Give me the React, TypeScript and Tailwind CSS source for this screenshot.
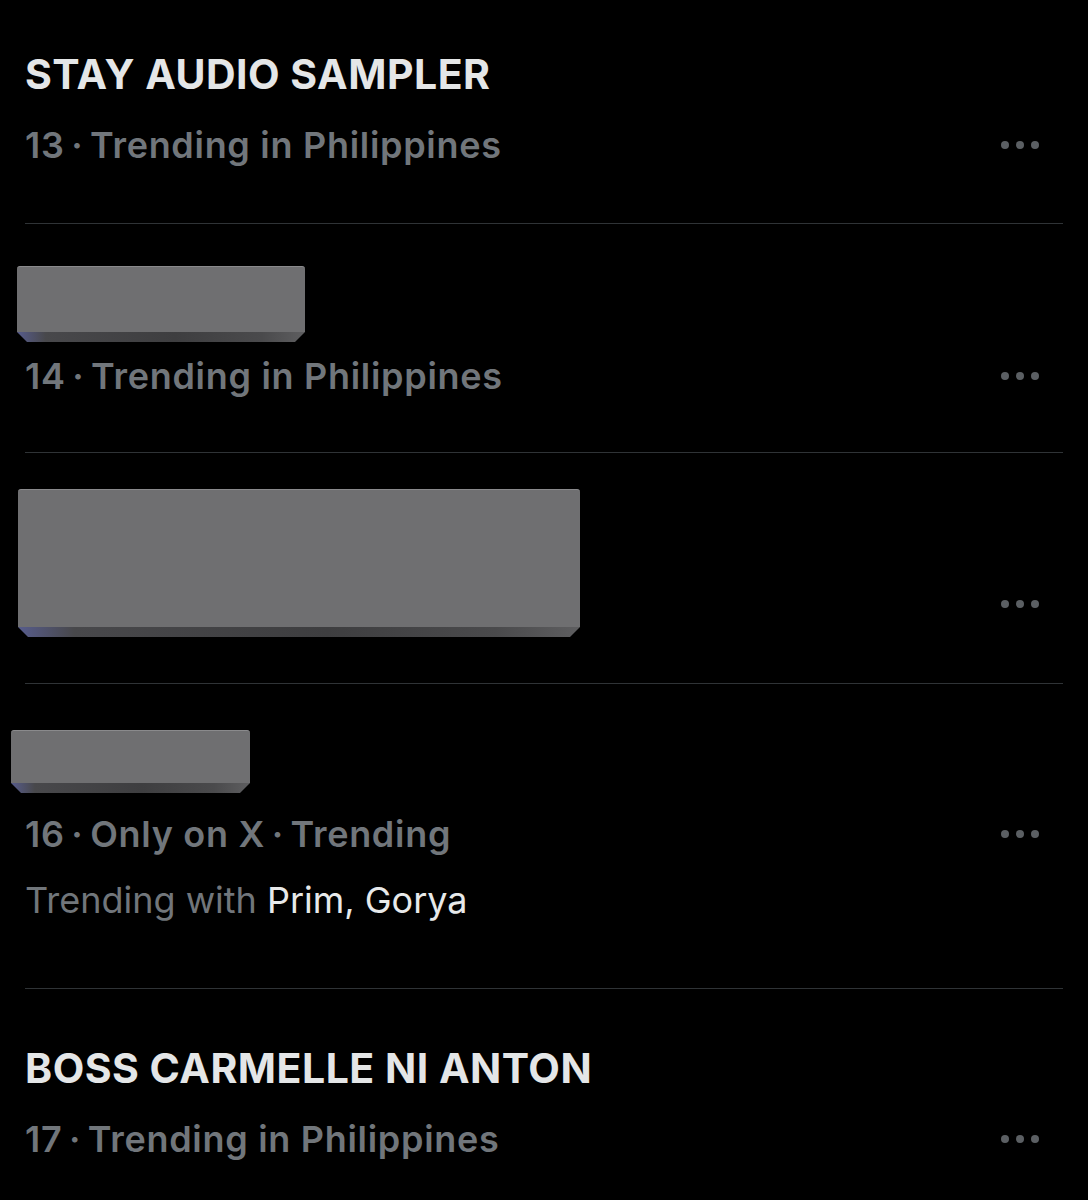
import React from 'react';

const font = { fontFamily: 'Inter, "Noto Sans", sans-serif' };

const Dots: React.FC = () => (
  <div className="flex items-center gap-[7px] pr-[24px]">
    <span className="w-[8px] h-[8px] rounded-full bg-[#5b5f63]" />
    <span className="w-[8px] h-[8px] rounded-full bg-[#5b5f63]" />
    <span className="w-[8px] h-[8px] rounded-full bg-[#5b5f63]" />
  </div>
);

// redaction block with a bevelled lower edge
const Redact: React.FC<{ w: number; h: number; className?: string }> = ({ w, h, className }) => (
  <div className={`flex flex-col ${className ?? ''}`} style={{ width: w, height: h }}>
    <div className="flex-1 bg-[#6f6f71] border-t border-[#8a8a8c] rounded-t-[3px]" />
    <div className="h-[10px] bg-[linear-gradient(90deg,#575c8c_0%,#48484b_10%,#3e3e40_55%,#4a4a4c_85%,#5e5e60_100%)] [clip-path:polygon(0_0,100%_0,calc(100%-10px)_100%,10px_100%)]" />
  </div>
);

const Meta: React.FC<{ parts: string[] }> = ({ parts }) => (
  <div className="flex items-center justify-between h-[70px]">
    <span className="text-[36px] font-semibold text-[#71767b] tracking-[0.7px]">
      {parts.join('\u2009·\u2009')}
    </span>
    <Dots />
  </div>
);

const Title: React.FC<{ children: React.ReactNode }> = ({ children }) => (
  <div className="flex items-center h-[70px] text-[41px] font-bold text-[#e4e6e7] tracking-[0.5px]">{children}</div>
);

export default function App() {
  return (
    <div className="min-h-screen w-[1088px] bg-black overflow-hidden" style={font}>
      <div className="ml-[25px] mr-[25px]">
        <div className="pt-[40px] pb-[43px] border-b border-[#2f3336]">
          <Title>STAY AUDIO SAMPLER</Title>
          <Meta parts={['13', 'Trending in Philippines']} />
        </div>

        <div className="pt-[42px] pb-[41px] border-b border-[#2f3336]">
          <Redact w={288} h={76} className="-ml-[8px] mb-[-1px]" />
          <Meta parts={['14', 'Trending in Philippines']} />
        </div>

        <div className="pt-[36px] pb-[46px] border-b border-[#2f3336] flex justify-between items-end">
          <Redact w={562} h={148} className="-ml-[7px]" />
          <div className="h-[70px] flex items-center mb-[-2px]">
            <Dots />
          </div>
        </div>

        <div className="pt-[46px] pb-[57px] border-b border-[#2f3336]">
          <Redact w={239} h={63} className="-ml-[14px] mb-[6px]" />
          <Meta parts={['16', 'Only on X', 'Trending']} />
          <div className="h-[62px] flex items-center text-[36px] text-[#71767b]">
            Trending with<span className="ml-[10px] text-[#e7e9ea]">Prim, Gorya</span>
          </div>
        </div>

        <div className="pt-[45px] pb-[40px]">
          <Title>BOSS CARMELLE NI ANTON</Title>
          <Meta parts={['17', 'Trending in Philippines']} />
        </div>
      </div>
    </div>
  );
}
